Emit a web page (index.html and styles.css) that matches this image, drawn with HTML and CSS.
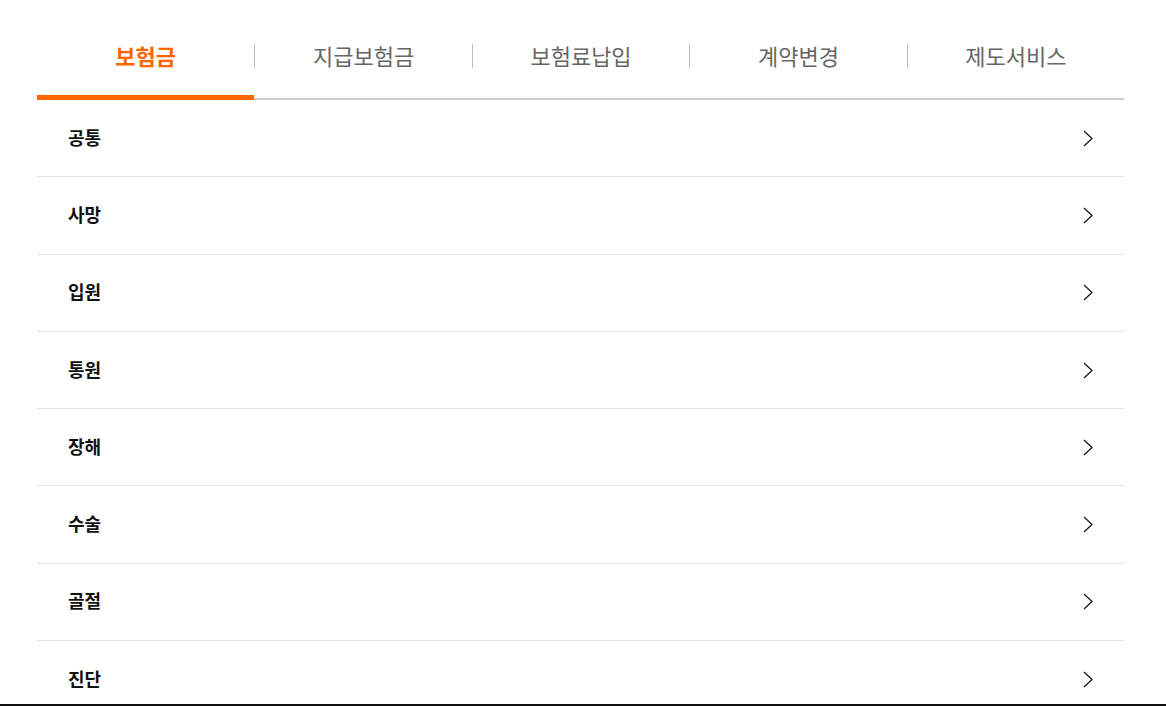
FILE: index.html
```html
<!doctype html>
<html lang="ko">

<head>
    <meta charset="UTF-8">
    <meta name="viewport" content="width=device-width, initial-scale=1">
    <link rel="stylesheet" href="styles.css">
    <title>보험금</title>
</head>

<body>
    <div class="wrap">
        <ul class="tabs">
            <li class="tab on"><span class="tab-label">보험금</span></li>
            <li class="tab"><span class="tab-label">지급보험금</span></li>
            <li class="tab"><span class="tab-label">보험료납입</span></li>
            <li class="tab"><span class="tab-label">계약변경</span></li>
            <li class="tab"><span class="tab-label">제도서비스</span></li>
        </ul>
        <ul class="menu">
            <li class="menu-item"><span>공통</span><svg class="arrow" width="10" height="17" viewBox="0 0 10 17"><polyline points="1,1 9,8.5 1,16" fill="none" stroke="#111" stroke-width="1.2"/></svg></li>
            <li class="menu-item"><span>사망</span><svg class="arrow" width="10" height="17" viewBox="0 0 10 17"><polyline points="1,1 9,8.5 1,16" fill="none" stroke="#111" stroke-width="1.2"/></svg></li>
            <li class="menu-item"><span>입원</span><svg class="arrow" width="10" height="17" viewBox="0 0 10 17"><polyline points="1,1 9,8.5 1,16" fill="none" stroke="#111" stroke-width="1.2"/></svg></li>
            <li class="menu-item"><span>통원</span><svg class="arrow" width="10" height="17" viewBox="0 0 10 17"><polyline points="1,1 9,8.5 1,16" fill="none" stroke="#111" stroke-width="1.2"/></svg></li>
            <li class="menu-item"><span>장해</span><svg class="arrow" width="10" height="17" viewBox="0 0 10 17"><polyline points="1,1 9,8.5 1,16" fill="none" stroke="#111" stroke-width="1.2"/></svg></li>
            <li class="menu-item"><span>수술</span><svg class="arrow" width="10" height="17" viewBox="0 0 10 17"><polyline points="1,1 9,8.5 1,16" fill="none" stroke="#111" stroke-width="1.2"/></svg></li>
            <li class="menu-item"><span>골절</span><svg class="arrow" width="10" height="17" viewBox="0 0 10 17"><polyline points="1,1 9,8.5 1,16" fill="none" stroke="#111" stroke-width="1.2"/></svg></li>
            <li class="menu-item"><span>진단</span><svg class="arrow" width="10" height="17" viewBox="0 0 10 17"><polyline points="1,1 9,8.5 1,16" fill="none" stroke="#111" stroke-width="1.2"/></svg></li>
        </ul>
    </div>
    <div class="bottom-bar"></div>
</body>

</html>
```

FILE: styles.css
```css
* {
    margin: 0;
    padding: 0;
    box-sizing: border-box;
}

body {
    font-family: "Noto Sans CJK KR", "Noto Sans", sans-serif;
    background: #fff;
    overflow: hidden;
}

ul {
    list-style: none;
}

.wrap {
    width: 1087px;
    margin-left: 37px;
}

/* 상단 탭 */
.tabs {
    display: flex;
    align-items: flex-start;
    border-bottom: 2px solid #cccccc;
}

.tab {
    flex: 1;
    padding: 44px 0 30px;
    display: flex;
}

.tab-label {
    flex: 1;
    height: 24px;
    line-height: 22px;
    text-align: center;
    font-size: 22px;
    color: #666;
}

.tab + .tab .tab-label {
    border-left: 1px solid #bbbbbb;
}

.tab.on {
    padding-bottom: 27px;
    border-bottom: 5px solid #ff6600;
    margin-bottom: -2px;
}

.tab.on .tab-label {
    color: #ff6600;
    font-weight: bold;
}

/* 메뉴 목록 */
.menu-item {
    height: 77.3px;
    display: flex;
    align-items: center;
    justify-content: space-between;
    padding: 0 31px 0 31px;
    border-bottom: 1px solid #e2e2e2;
    font-size: 18px;
    font-weight: bold;
    color: #111;
}

.menu-item span {
    margin-bottom: 3px;
}

.arrow {
    display: block;
}

.bottom-bar {
    position: fixed;
    left: 0;
    right: 0;
    bottom: 0;
    height: 2px;
    background: #111;
}
```
